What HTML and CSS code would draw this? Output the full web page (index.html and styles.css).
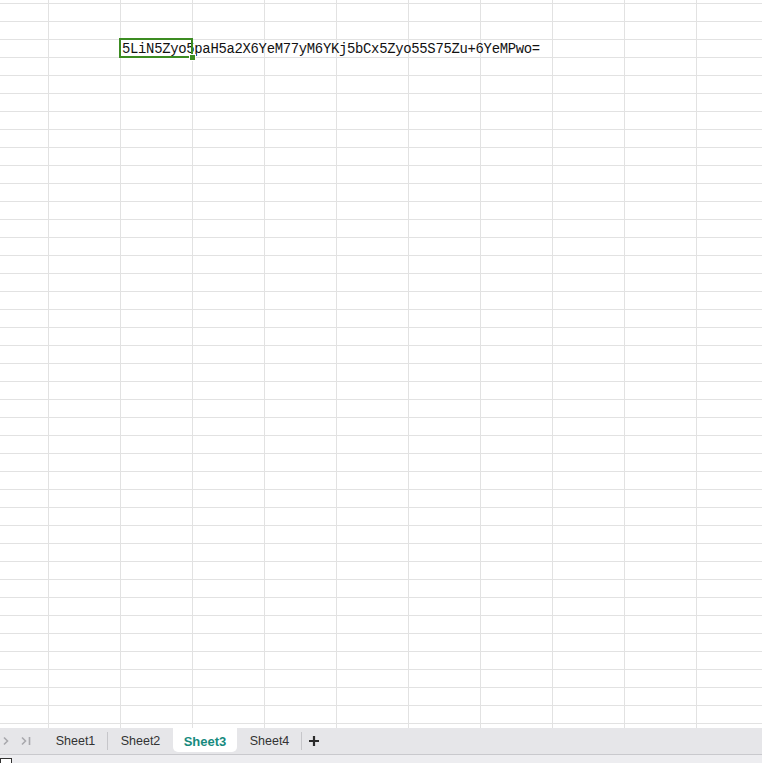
FILE: index.html
```html
<!DOCTYPE html>
<html>
<head>
<meta charset="utf-8">
<link rel="stylesheet" href="styles.css">
</head>
<body>
<div class="app">
  <div class="sheet">
    <div class="row">
      <div class="cell">5LiN5Zyo5paH5a2X6YeM77yM6YKj5bCx5Zyo55S75Zu+6YeMPwo=</div>
    </div>
    <div class="selection"><span class="handle"></span></div>
  </div>
  <div class="tabbar">
    <div class="nav">
      <svg class="arrow" width="8" height="12" viewBox="0 0 8 12"><path d="M2 2.5 L5.5 6 L2 9.5" fill="none" stroke="#a9a9ad" stroke-width="1.6"/></svg>
      <svg class="arrow last" width="12" height="12" viewBox="0 0 12 12"><path d="M2 2.5 L5.5 6 L2 9.5" fill="none" stroke="#a9a9ad" stroke-width="1.6"/><path d="M9.5 2 V10" stroke="#a9a9ad" stroke-width="1.6"/></svg>
    </div>
    <div class="tabs">
      <div class="tab sep wide">Sheet1</div>
      <div class="tab wide">Sheet2</div>
      <div class="tab active">Sheet3</div>
      <div class="tab sep wide">Sheet4</div>
      <div class="add">
        <svg width="12" height="12" viewBox="0 0 12 12"><path d="M6 1 V11 M1 6 H11" stroke="#2b2b2b" stroke-width="2.2"/></svg>
      </div>
    </div>
  </div>
  <div class="status">
    <span class="box"></span>
  </div>
</div>
</body>
</html>
```
FILE: styles.css
```css
html, body {
  margin: 0;
  padding: 0;
  background: #ffffff;
}
.app {
  width: 762px;
  height: 763px;
  overflow: hidden;
  display: flex;
  flex-direction: column;
}
.sheet {
  position: relative;
  height: 728px;
  flex: none;
  background-color: #ffffff;
  background-image:
    linear-gradient(to right, #e2e2e2 0, #e2e2e2 1px, transparent 1px),
    linear-gradient(to bottom, #e2e2e2 0, #e2e2e2 1px, transparent 1px);
  background-size: 72px 100%, 100% 18px;
  background-position: 48px 0, 0 3px;
  padding-top: 40px;
  box-sizing: border-box;
}
.row {
  height: 18px;
  padding-left: 122px;
}
.cell {
  font-family: "Liberation Mono", "DejaVu Sans Mono", monospace;
  font-size: 13.9px;
  line-height: 19px;
  color: #111111;
  white-space: nowrap;
  letter-spacing: -0.3px;
}
.selection {
  position: absolute;
  left: 119px;
  top: 38px;
  width: 70px;
  height: 16px;
  border: 2px solid #3c8c22;
}
.handle {
  position: absolute;
  right: -5px;
  bottom: -5px;
  width: 5px;
  height: 5px;
  background: #3c8c22;
  border: 1px solid #ffffff;
}
.tabbar {
  height: 26px;
  flex: none;
  background: #e6e6e9;
  border-bottom: 1px solid #c9c9cd;
  display: flex;
  align-items: flex-start;
}
.nav {
  width: 43px;
  height: 26px;
  display: flex;
  align-items: center;
  padding-left: 2px;
  box-sizing: border-box;
  gap: 10px;
}
.tabs {
  display: flex;
  align-items: flex-start;
}
.tab {
  width: 64px;
  height: 24px;
  line-height: 27px;
  text-align: center;
  font-family: "Liberation Sans", Arial, sans-serif;
  font-size: 12.5px;
  color: #333333;
  position: relative;
}
.tab.wide { width: 65px; }
.tab.sep::after {
  content: "";
  position: absolute;
  right: 0;
  top: 4px;
  width: 1px;
  height: 18px;
  background: #c6c6ca;
}
.tab.active {
  background: #ffffff;
  border-radius: 0 0 5px 5px;
  color: #168a7e;
  font-weight: bold;
  font-size: 13px;
}
.add {
  width: 24px;
  height: 26px;
  display: flex;
  align-items: center;
  justify-content: center;
}
.status {
  flex: 1;
  background: #ededf0;
  position: relative;
}
.box {
  position: absolute;
  left: 0;
  top: 3px;
  width: 10px;
  height: 10px;
  border: 1px solid #333333;
  background: #ffffff;
}
```
